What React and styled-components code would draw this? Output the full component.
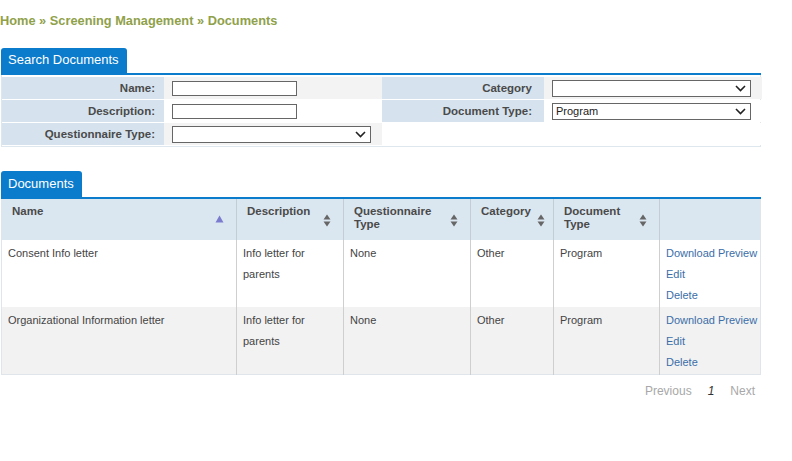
import styled, { createGlobalStyle } from 'styled-components';

const Global = createGlobalStyle`
  body {
    margin: 0;
    background: #fff;
    font-family: 'Liberation Sans', Arial, sans-serif;
    font-size: 11px;
    color: #444;
  }
`;

const BLUE = '#0b7bcc';

const columns = [
  { key: 'name', label: 'Name', width: 235, sort: 'asc' },
  { key: 'description', label: 'Description', width: 107, sort: 'both' },
  { key: 'qtype', label: 'Questionnaire Type', width: 127, sort: 'both' },
  { key: 'category', label: 'Category', width: 83, sort: 'both' },
  { key: 'dtype', label: 'Document Type', width: 106, sort: 'both' },
  { key: 'actions', label: '', width: 101 },
];

const documents = [
  { id: 1, name: 'Consent Info letter', description: 'Info letter for parents', qtype: 'None', category: 'Other', dtype: 'Program' },
  { id: 2, name: 'Organizational Information letter', description: 'Info letter for parents', qtype: 'None', category: 'Other', dtype: 'Program' },
];

function Chevron() {
  return (
    <svg width="11" height="7" viewBox="0 0 11 7">
      <path d="M1 1l4.5 4.5L10 1" fill="none" stroke="#222" strokeWidth="1.6" />
    </svg>
  );
}

function SortIcon({ type }) {
  if (type === 'asc') {
    return (
      <SortSvg width="9" height="8" viewBox="0 0 9 8" $offset={-4}>
        <path d="M4.5 0.5L8.5 7.5H0.5Z" fill="#7c7ccf" />
      </SortSvg>
    );
  }
  return (
    <SortSvg width="8" height="13" viewBox="0 0 8 13">
      <path d="M4 0.5L7.5 5.5H0.5Z" fill="#666" />
      <path d="M4 12.5L7.5 7.5H0.5Z" fill="#666" />
    </SortSvg>
  );
}

function Select({ value, width }) {
  return (
    <SelectBox $width={width}>
      <span>{value}</span>
      <Chevron />
    </SelectBox>
  );
}

export default function App() {
  return (
    <Page>
      <Global />
      <Breadcrumb>Home » Screening Management » Documents</Breadcrumb>

      <Tab>Search Documents</Tab>
      <Panel>
        <SearchGrid>
          <Label>Name:</Label>
          <Field $shade><TextInput /></Field>
          <Label $pad={12}>Category</Label>
          <Field $shade><Select value="" width={199} /></Field>

          <Label>Description:</Label>
          <Field><TextInput /></Field>
          <Label $pad={12}>Document Type:</Label>
          <Field><Select value="Program" width={199} /></Field>

          <Label>Questionnaire Type:</Label>
          <Field $shade><Select value="" width={199} /></Field>
          <Field />
          <Field />
        </SearchGrid>
      </Panel>

      <Tab $top={24} $height={26}>Documents</Tab>
      <Panel>
        <Table>
          <colgroup>
            {columns.map(c => <col key={c.key} style={{ width: c.width }} />)}
          </colgroup>
          <thead>
            <tr>
              {columns.map(c => (
                <Th key={c.key}>
                  <HeadInner>
                    <span>{c.label}</span>
                    {c.sort && <SortIcon type={c.sort} />}
                  </HeadInner>
                </Th>
              ))}
            </tr>
          </thead>
          <tbody>
            {documents.map((d, i) => (
              <Row key={d.id} $alt={i % 2 === 1}>
                <Td>{d.name}</Td>
                <Td>{d.description}</Td>
                <Td>{d.qtype}</Td>
                <Td>{d.category}</Td>
                <Td>{d.dtype}</Td>
                <Td>
                  <Actions>
                    <a>Download Preview</a>
                    <a>Edit</a>
                    <a>Delete</a>
                  </Actions>
                </Td>
              </Row>
            ))}
          </tbody>
        </Table>
      </Panel>

      <Pager>
        <PagerLink>Previous</PagerLink>
        <Current>1</Current>
        <PagerLink>Next</PagerLink>
      </Pager>
    </Page>
  );
}

const Page = styled.div`
  width: 760px;
  padding: 13px 0 0 1px;
`;

const Breadcrumb = styled.div`
  font-size: 12.8px;
  font-weight: bold;
  line-height: 16px;
  color: #8fa14a;
  margin: 0 0 19px -1px;
`;

const Tab = styled.div`
  display: inline-block;
  margin-top: ${p => p.$top || 0}px;
  height: ${p => p.$height || 25}px;
  line-height: ${p => (p.$height || 25) - 1}px;
  padding: 0 8px 0 7px;
  background: ${BLUE};
  color: #fff;
  font-size: 13px;
  border-radius: 3px 3px 0 0;
  vertical-align: bottom;
`;

const Panel = styled.div`
  border-top: 2px solid ${BLUE};
`;

const SearchGrid = styled.div`
  display: grid;
  grid-template-columns: 162px 218px 162px 218px;
  grid-auto-rows: 22px;
  row-gap: 1px;
  padding: 2px 0 1px;
  border: 1px solid #dfe7ee;
  border-top: none;
`;

const Label = styled.div`
  display: flex;
  align-items: center;
  justify-content: flex-end;
  padding-right: ${p => p.$pad || 9}px;
  background: #d6e3ee;
  font-weight: bold;
  font-size: 11.5px;
  color: #4a4a4a;
`;

const Field = styled.div`
  display: flex;
  align-items: center;
  padding-left: 8px;
  background: ${p => (p.$shade ? '#f3f3f3' : '#fff')};
`;

const TextInput = styled.input`
  box-sizing: border-box;
  width: 125px;
  height: 15px;
  margin: 0;
  padding: 0 3px;
  border: 1px solid #666;
  background: #fff;
  font: inherit;
`;

const SelectBox = styled.div`
  box-sizing: border-box;
  display: flex;
  align-items: center;
  justify-content: space-between;
  width: ${p => p.$width}px;
  height: 17px;
  padding: 0 4px 0 3px;
  border: 1px solid #666;
  background: #fff;
  font-size: 11px;
  color: #222;
`;

const Table = styled.table`
  width: 760px;
  table-layout: fixed;
  border-collapse: collapse;
  border: 1px solid #dfe5ea;
  border-top: none;
`;

const Th = styled.th`
  height: 41px;
  padding: 6px 10px 0 10px;
  vertical-align: top;
  text-align: left;
  background: #dae6f0;
  border-left: 1px solid #c3cdd5;
  font-size: 11.5px;
  line-height: 13px;
  color: #4a4a4a;
  box-sizing: border-box;
  &:first-child { border-left: none; }
`;

const HeadInner = styled.div`
  display: flex;
  align-items: flex-start;
  justify-content: space-between;
  gap: 6px;
  height: 34px;
  span { flex: 1; }
`;

const SortSvg = styled.svg`
  flex: none;
  align-self: center;
  margin-top: ${p => (p.$offset || 0) - 3}px;
  margin-right: 2px;
`;

const Row = styled.tr`
  background: ${p => (p.$alt ? '#f2f2f2' : '#fff')};
`;

const Td = styled.td`
  height: 67px;
  box-sizing: border-box;
  padding: 3px 6px 1px;
  vertical-align: top;
  line-height: 21px;
  color: #444;
  border-left: 1px solid #cfcfcf;
  &:first-child { border-left: none; }
`;

const Actions = styled.div`
  display: flex;
  flex-direction: column;
  a {
    color: #3a6ea8;
    cursor: pointer;
    white-space: nowrap;
  }
`;

const Pager = styled.div`
  display: flex;
  justify-content: flex-end;
  align-items: center;
  gap: 16px;
  padding: 8px 6px 0 0;
  font-size: 12px;
  line-height: 16px;
`;

const PagerLink = styled.span`
  color: #a8a8a8;
`;

const Current = styled.span`
  font-style: italic;
  color: #333;
`;
